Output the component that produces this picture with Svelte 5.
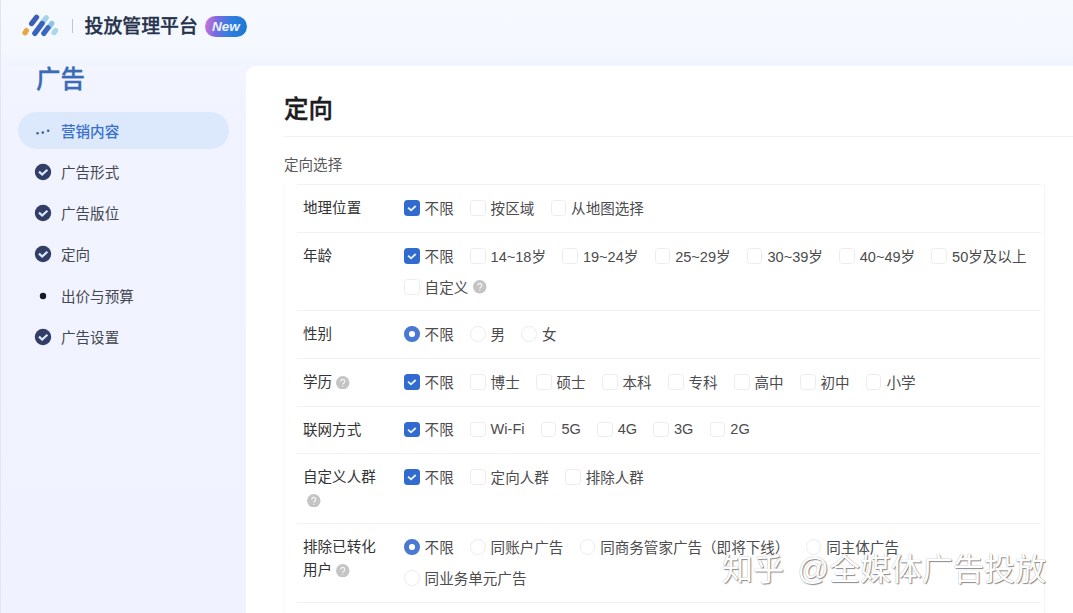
<script lang="ts">
  type Row = {
    label: string[];
    help?: boolean;
    kind: 'checkbox' | 'radio';
    height: number;
    options: string[][];
    helpOption?: string;
  };

  const steps = [
    { name: '营销内容', state: 'active' },
    { name: '广告形式', state: 'done' },
    { name: '广告版位', state: 'done' },
    { name: '定向', state: 'done' },
    { name: '出价与预算', state: 'todo' },
    { name: '广告设置', state: 'done' }
  ];

  const rows: Row[] = [
    { label: ['地理位置'], kind: 'checkbox', height: 48, options: [['不限', '按区域', '从地图选择']] },
    {
      label: ['年龄'],
      kind: 'checkbox',
      height: 78,
      options: [['不限', '14~18岁', '19~24岁', '25~29岁', '30~39岁', '40~49岁', '50岁及以上'], ['自定义']],
      helpOption: '自定义'
    },
    { label: ['性别'], kind: 'radio', height: 48, options: [['不限', '男', '女']] },
    {
      label: ['学历'],
      help: true,
      kind: 'checkbox',
      height: 47.5,
      options: [['不限', '博士', '硕士', '本科', '专科', '高中', '初中', '小学']]
    },
    { label: ['联网方式'], kind: 'checkbox', height: 47.5, options: [['不限', 'Wi-Fi', '5G', '4G', '3G', '2G']] },
    {
      label: ['自定义人群', ''],
      help: true,
      kind: 'checkbox',
      height: 70,
      options: [['不限', '定向人群', '排除人群']]
    },
    {
      label: ['排除已转化', '用户'],
      help: true,
      kind: 'radio',
      height: 79,
      options: [['不限', '同账户广告', '同商务管家广告（即将下线）', '同主体广告'], ['同业务单元广告']]
    }
  ];

  let selected = $state(rows.map(() => '不限'));
</script>

{#snippet help()}
  <svg class="help" viewBox="0 0 14 14">
    <circle cx="7" cy="7" r="7" fill="#c4c4c4" />
    <path d="M4.9 5.6a2.1 2.1 0 1 1 3.2 1.8c-.7.4-1.1.8-1.1 1.5M7 10v1.2" fill="none" stroke="#f4f4f4" stroke-width="1.3" />
  </svg>
{/snippet}

<div class="page">
  <header>
    <svg class="logo" width="38" height="24" viewBox="0 0 38 24">
      <g fill="none" stroke-linecap="round" stroke-width="5.2">
        <path d="M4 18.8l1.4-2.2" stroke="#e6a840" />
        <path d="M21.8 8l3.4-4.2" stroke="#a3d3ea" />
        <path d="M28.2 13l2.6-3.6" stroke="#8fc6e6" />
        <path d="M33 18.6l1.6-2.2" stroke="#a9d8ec" />
        <path d="M10.6 9.6l5-6.4" stroke="#3b5fb4" />
        <path d="M13.8 19.4l7.4-10" stroke="#3862bb" />
        <path d="M22.8 19.4l4.2-5.6" stroke="#3b67c2" />
      </g>
    </svg>
    <span class="divider"></span>
    <span class="platform">投放管理平台</span>
    <span class="new">New</span>
  </header>

  <div class="body">
    <nav>
      <h2>广告</h2>
      {#each steps as step}
        <div class="step" class:active={step.state === 'active'}>
          <svg width="16" height="16" viewBox="0 0 16 16">
            {#if step.state === 'active'}
              <g fill="#4a5f96">
                <circle cx="2.6" cy="10.2" r="1.3" />
                <circle cx="7.8" cy="9.6" r="1.3" />
                <circle cx="13.2" cy="7.8" r="1.3" />
              </g>
            {:else if step.state === 'done'}
              <circle cx="8" cy="8" r="8.2" fill="#333e66" />
              <path d="M4 7.6l3.2 3 5.2-4.8" fill="none" stroke="#dce8ff" stroke-width="2.2" />
            {:else}
              <circle cx="8" cy="8" r="3.2" fill="#161a26" />
            {/if}
          </svg>
          <span>{step.name}</span>
        </div>
      {/each}
    </nav>

    <main>
      <h1>定向</h1>
      <p class="section">定向选择</p>
      <div class="table">
        {#each rows as row, i}
          <div class="row" style="height: {row.height}px">
            <div class="label">
              {#each row.label as line, n}
                <div class="label-line" class:only-help={line === ''}>
                  {line}{#if row.help && n === row.label.length - 1}{@render help()}{/if}
                </div>
              {/each}
            </div>
            <div class="options">
              {#each row.options as line}
                <div class="line">
                  {#each line as option}
                    <button class="option" onclick={() => (selected[i] = option)}>
                      <span class="box {row.kind}" class:checked={selected[i] === option}>
                        {#if selected[i] === option && row.kind === 'checkbox'}
                          <svg width="16" height="16" viewBox="0 0 16 16">
                            <path d="M4.2 7.6l3 2.8 4.8-4.4" fill="none" stroke="#e9f4ff" stroke-width="1.9" />
                          </svg>
                        {/if}
                      </span>
                      <span class="text">{option}</span>
                      {#if row.helpOption === option}{@render help()}{/if}
                    </button>
                  {/each}
                </div>
              {/each}
            </div>
          </div>
        {/each}
        <div class="row next"></div>
      </div>
    </main>
  </div>
  <div class="watermark">知乎 @全媒体广告投放</div>
</div>

<style>
  :global(body) {
    overflow: hidden;
  }
  .page {
    position: relative;
    box-sizing: border-box;
    width: 1073px;
    height: 613px;
    overflow: hidden;
    border-left: 1px solid #e1e6f7;
    background: linear-gradient(180deg, #f5f8ff 0, #f1f4ff 110px, #f0f3ff 100%);
    color: #4c4c4e;
    font-family: 'Liberation Sans', 'Noto Sans CJK SC', sans-serif;
    font-size: 14.55px;
  }
  header {
    display: flex;
    align-items: center;
    box-sizing: border-box;
    height: 66px;
    padding: 0 0 14px 20px;
    background: linear-gradient(180deg, #f6f9fe 0, #f4f7fe 80%, #f0f4fd 100%);
  }
  .divider {
    width: 1px;
    height: 14px;
    margin: 0 12px 0 12.5px;
    background: #c0c5d0;
  }
  .platform {
    padding-top: 2px;
    color: #25324b;
    font-size: 18.9px;
    font-weight: 500;
    line-height: 24px;
    -webkit-text-stroke: 0.3px;
  }
  .new {
    width: 42px;
    height: 21px;
    margin-left: 7px;
    border-radius: 11px;
    background: linear-gradient(100deg, #d873d6 0, #7b6be0 28%, #2f7ee0 60%, #1c77d2 100%);
    color: #eaf4ff;
    font-size: 13.5px;
    font-style: italic;
    font-weight: 700;
    line-height: 21px;
    text-align: center;
  }
  .body {
    display: flex;
    height: 547px;
  }
  nav {
    flex: none;
    width: 211px;
    padding: 0 17px;
  }
  h2 {
    height: 27px;
    margin: 0 0 19px 18px;
    color: #3a6cb5;
    font-size: 24.5px;
    font-weight: 500;
    line-height: 27px;
    -webkit-text-stroke: 0.3px;
  }
  .step {
    display: flex;
    align-items: center;
    gap: 10px;
    height: 37px;
    margin: 2px 0 4.3px;
    padding-left: 17px;
    border-radius: 19px;
    color: #43474f;
  }
  .step svg {
    overflow: visible;
  }
  .step span {
    padding-bottom: 1px;
  }
  .step.active {
    background: #dce9fd;
    color: #3a70cd;
    font-weight: 500;
  }
  main {
    flex: 1;
    padding-left: 38px;
    border-top-left-radius: 10px;
    background: #fff;
  }
  h1 {
    height: 70px;
    margin: 0;
    border-bottom: 1px solid #f0f0f0;
    color: #1d1d1f;
    font-size: 24.5px;
    font-weight: 500;
    line-height: 87px;
    -webkit-text-stroke: 0.4px;
  }
  .section {
    height: 47px;
    margin: 0;
    color: #58585a;
    line-height: 56px;
  }
  .table {
    box-sizing: border-box;
    width: 761px;
    border-right: 1px solid #f5f5f5;
    border-left: 1px solid #fafafa;
  }
  .row {
    display: flex;
    box-sizing: border-box;
    margin: 0 3px 0 12px;
    padding: 8px 0 0 6px;
    border-top: 1px solid #f1f1f1;
  }
  .row.next {
    height: 12px;
  }
  .label {
    flex: none;
    width: 101px;
    padding-top: 4px;
    color: #333335;
  }
  .label-line {
    display: flex;
    align-items: center;
    gap: 4px;
    height: 23px;
    line-height: 23px;
    white-space: nowrap;
  }
  .only-help {
    padding-left: 4px;
  }
  .help {
    flex: none;
    width: 13.5px;
    height: 13.5px;
  }
  .line {
    display: flex;
    gap: 16.3px;
    height: 31px;
  }
  .option {
    display: flex;
    align-items: center;
    gap: 5px;
    height: 30px;
    padding: 0;
    border: 0;
    background: none;
    color: inherit;
    font: inherit;
    white-space: nowrap;
  }
  .text {
    padding-bottom: 2px;
  }
  .box {
    display: flex;
    box-sizing: border-box;
    width: 15.6px;
    height: 15.6px;
    border: 1px solid #ececec;
    border-radius: 3.5px;
  }
  .box.radio {
    border-radius: 50%;
  }
  .box.checked {
    border: 0;
    background: #326bd0;
  }
  .box.radio.checked {
    border: 5px solid #4a78d2;
    background: #fff;
  }
  .watermark {
    position: absolute;
    right: 27px;
    bottom: 23px;
    color: #fff;
    font-size: 31px;
    line-height: 40px;
    text-shadow: 1px 1px 1px #8a8a8a, 0 0 1px #a0a0a0;
    white-space: nowrap;
    word-spacing: 5px;
  }
</style>
